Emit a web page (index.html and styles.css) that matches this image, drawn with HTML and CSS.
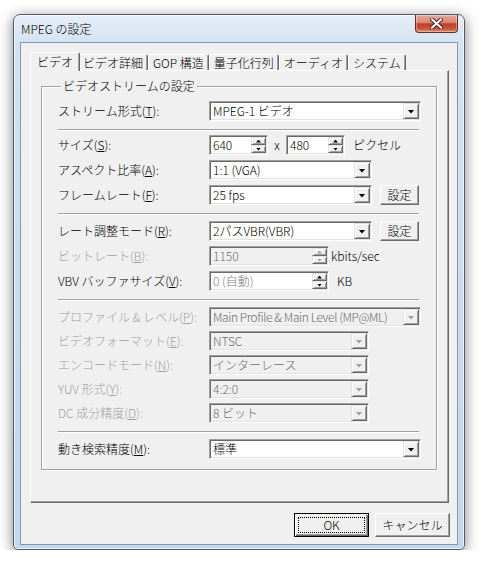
FILE: index.html
```html
<!DOCTYPE html>
<html lang="ja">
<head>
    <meta charset="UTF-8">
    <title>MPEG の設定</title>
    <link rel="stylesheet" href="styles.css">
</head>
<body>
    <div class="window">
        <!-- タイトルバー -->
        <div class="titlebar">
            <span class="title">MPEG の設定</span>
            <button class="close" title="閉じる">
                <svg width="13" height="11" viewBox="0 0 13 11">
                    <path d="M2 1.5 L11 9.5 M11 1.5 L2 9.5" stroke="#4a2a26" stroke-width="4" stroke-linecap="square"/>
                    <path d="M2 1.5 L11 9.5 M11 1.5 L2 9.5" stroke="#fff" stroke-width="2" stroke-linecap="square"/>
                </svg>
            </button>
        </div>

        <div class="client">
            <!-- タブ -->
            <div class="tabs">
                <span class="tab on">ビデオ</span>
                <span class="tab">ビデオ詳細</span>
                <span class="tab">GOP 構造</span>
                <span class="tab">量子化行列</span>
                <span class="tab">オーディオ</span>
                <span class="tab">システム</span>
            </div>

            <div class="panel">
                <fieldset class="group">
                    <legend>ビデオストリームの設定</legend>

                    <div class="row">
                        <span class="lbl">ストリーム形式(<u>T</u>):</span>
                        <div class="combo wide"><span class="val">MPEG-1 ビデオ</span><span class="drop"></span></div>
                    </div>

                    <div class="sep first"></div>

                    <div class="sect">
                        <div class="row">
                            <span class="lbl">サイズ(<u>S</u>):</span>
                            <div class="spin small"><span class="val">640</span><span class="arrows"><span class="up"></span><span class="down"></span></span></div>
                            <span class="times">x</span>
                            <div class="spin small"><span class="val">480</span><span class="arrows"><span class="up"></span><span class="down"></span></span></div>
                            <span class="unit">ピクセル</span>
                        </div>
                        <div class="row">
                            <span class="lbl">アスペクト比率(<u>A</u>):</span>
                            <div class="combo mid"><span class="val">1:1 (VGA)</span><span class="drop"></span></div>
                        </div>
                        <div class="row">
                            <span class="lbl">フレームレート(<u>F</u>):</span>
                            <div class="combo mid"><span class="val">25 fps</span><span class="drop"></span></div>
                            <button class="btn">設定</button>
                        </div>
                    </div>

                    <div class="sep"></div>

                    <div class="sect">
                        <div class="row">
                            <span class="lbl">レート調整モード(<u>R</u>):</span>
                            <div class="combo mid"><span class="val">2パスVBR(VBR)</span><span class="drop"></span></div>
                            <button class="btn">設定</button>
                        </div>
                        <div class="row">
                            <span class="lbl off">ビットレート(<u>B</u>):</span>
                            <div class="spin long dis"><span class="val">1150</span><span class="arrows"><span class="up"></span><span class="down"></span></span></div>
                            <span class="unit tight">kbits/sec</span>
                        </div>
                        <div class="row">
                            <span class="lbl">VBV バッファサイズ(<u>V</u>):</span>
                            <div class="spin long"><span class="val dim">0 (自動)</span><span class="arrows"><span class="up"></span><span class="down"></span></span></div>
                            <span class="unit">KB</span>
                        </div>
                    </div>

                    <div class="sep"></div>

                    <div class="sect dense">
                        <div class="row">
                            <span class="lbl off">プロファイル &amp; レベル(<u>P</u>):</span>
                            <div class="combo wide dis"><span class="val fit">Main Profile &amp; Main Level (MP@ML)</span><span class="drop"></span></div>
                        </div>
                        <div class="row">
                            <span class="lbl off">ビデオフォーマット(<u>E</u>):</span>
                            <div class="combo narrow dis"><span class="val">NTSC</span><span class="drop"></span></div>
                        </div>
                        <div class="row">
                            <span class="lbl off">エンコードモード(<u>N</u>):</span>
                            <div class="combo narrow dis"><span class="val">インターレース</span><span class="drop"></span></div>
                        </div>
                        <div class="row">
                            <span class="lbl off">YUV 形式(<u>Y</u>):</span>
                            <div class="combo narrow dis"><span class="val">4:2:0</span><span class="drop"></span></div>
                        </div>
                        <div class="row">
                            <span class="lbl off">DC 成分精度(<u>D</u>):</span>
                            <div class="combo narrow dis"><span class="val">8 ビット</span><span class="drop"></span></div>
                        </div>
                    </div>

                    <div class="sep"></div>

                    <div class="row">
                        <span class="lbl">動き検索精度(<u>M</u>):</span>
                        <div class="combo wide"><span class="val">標準</span><span class="drop"></span></div>
                    </div>
                </fieldset>
            </div>

            <!-- OK / キャンセル -->
            <div class="buttons">
                <button class="btn big default">OK</button>
                <button class="btn big">キャンセル</button>
            </div>
        </div>
    </div>
</body>
</html>
```

FILE: styles.css
```css
* {
    box-sizing: border-box;
}

body {
    margin: 0;
    background-color: #fff;
    font: 300 12px/14px "Noto Sans CJK JP", "Liberation Sans", sans-serif;
    color: #000;
}

u {
    text-decoration: underline;
    text-underline-offset: 1px;
}

/* ウィンドウ枠 */
.window {
    margin: 14px 0 0 13px;
    width: 452px;
    height: 536px;
    display: flex;
    flex-direction: column;
    border: 1px solid #4e5d6e;
    border-radius: 7px 7px 5px 5px;
    background: linear-gradient(180deg, #e6eef8 0, #d4e2f1 28px, #c8dbef 60%, #c2d8ee 100%);
    box-shadow: 0 3px 14px rgba(0, 0, 0, 0.5), inset 0 0 0 1px rgba(255, 255, 255, 0.7);
}

.titlebar {
    height: 27px;
    flex: none;
    display: flex;
    justify-content: space-between;
    align-items: flex-start;
}

.title {
    padding: 7px 0 0 7px;
}

.close {
    width: 43px;
    height: 18px;
    margin-right: 6px;
    padding: 0;
    border: 1px solid #6b2b22;
    border-top: none;
    border-radius: 0 0 4px 4px;
    background: linear-gradient(180deg, #e7ab9e 0, #d98272 45%, #bf3f2a 52%, #c85238 78%, #de8e72 100%);
    box-shadow: inset 0 0 0 1px rgba(255, 255, 255, 0.35);
    display: flex;
    align-items: center;
    justify-content: center;
}

/* クライアント領域 */
.client {
    flex: 1;
    margin: 0 6px 4px;
    border: 1px solid #8496a9;
    background-color: #f0f0f0;
    display: flex;
    flex-direction: column;
    padding: 9px 8px 7px 9px;
}

/* タブ */
.tabs {
    height: 18px;
    flex: none;
    display: flex;
    align-items: flex-end;
    padding-left: 2px;
}

.tab {
    height: 16px;
    padding: 0 4px;
    border: 1px solid;
    border-bottom: none;
    border-color: #fff #696969 transparent #fff;
    border-radius: 2px 2px 0 0;
    box-shadow: inset -1px 0 #a0a0a0;
    line-height: 15px;
    white-space: nowrap;
}

.tab.on {
    height: 19px;
    margin: 0 -2px -1px;
    padding: 0 6px;
    position: relative;
    z-index: 1;
    background-color: #f0f0f0;
    line-height: 17px;
}

.panel {
    flex: 1;
    border: 1px solid;
    border-color: #fff #696969 #696969 #fff;
    box-shadow: inset -1px -1px #a0a0a0;
    padding: 8px 11px 0 10px;
}

/* グループボックス */
.group {
    margin: 0;
    min-width: 0;
    border: 1px solid #a0a0a0;
    box-shadow: inset 1px 1px #fff, 1px 1px #fff;
    padding: 8px 17px 10px 16px;
}

.group legend {
    margin-left: 3px;
    padding: 0 2px;
    background-color: #f0f0f0;
    line-height: 14px;
}

.sect {
    display: flex;
    flex-direction: column;
    gap: 5px;
}

.sect.dense {
    gap: 4px;
}

.row {
    height: 20px;
    display: flex;
    align-items: center;
}

.lbl {
    width: 151px;
    flex: none;
    white-space: nowrap;
}

.off {
    color: #a0a0a0;
}

.sep {
    height: 2px;
    border-top: 1px solid #a0a0a0;
    border-bottom: 1px solid #fff;
    margin: 8px 0 6px;
}

.sep.first {
    margin-bottom: 4px;
}

/* コンボボックス・エディット */
.combo,
.spin {
    height: 20px;
    flex: none;
    display: flex;
    align-items: stretch;
    border: 1px solid;
    border-color: #a0a0a0 #fff #fff #a0a0a0;
    box-shadow: inset 1px 1px #696969, inset -1px -1px #e3e3e3;
    background-color: #fff;
    padding: 1px;
}

.combo.wide { width: 212px; }
.combo.mid { width: 163px; }
.combo.narrow { width: 160px; }
.spin.small { width: 59px; }
.spin.long { width: 120px; }

.combo.dis,
.spin.dis {
    background-color: #f0f0f0;
    color: #6d6d6d;
}

.val {
    flex: 1;
    padding-left: 2px;
    line-height: 16px;
    white-space: nowrap;
    overflow: hidden;
}

/* 長い項目名は字間を詰める */
.val.fit {
    letter-spacing: -0.4px;
}

.dim {
    color: #808080;
}

.drop {
    width: 16px;
    flex: none;
    background-color: #f0f0f0;
    border: 1px solid;
    border-color: #e3e3e3 #696969 #696969 #e3e3e3;
    box-shadow: inset 1px 1px #fff, inset -1px -1px #a0a0a0;
    display: flex;
    align-items: center;
    justify-content: center;
}

.drop::after {
    content: "";
    width: 7px;
    height: 4px;
    margin-top: 1px;
    background-color: #000;
    clip-path: polygon(0 0, 100% 0, 50% 100%);
}

.dis .drop::after {
    background-color: #a0a0a0;
}

/* スピンボタン */
.arrows {
    width: 15px;
    flex: none;
    display: flex;
    flex-direction: column;
}

.arrows span {
    flex: 1;
    background-color: #f0f0f0;
    border: 1px solid;
    border-color: #e3e3e3 #696969 #696969 #e3e3e3;
    box-shadow: inset 1px 1px #fff, inset -1px -1px #a0a0a0;
    display: flex;
    align-items: center;
    justify-content: center;
}

.arrows span::after {
    content: "";
    width: 5px;
    height: 3px;
    background-color: #000;
}

.arrows .up::after {
    clip-path: polygon(50% 0, 100% 100%, 0 100%);
}

.arrows .down::after {
    clip-path: polygon(0 0, 100% 0, 50% 100%);
}

.dis .arrows span::after {
    background-color: #a0a0a0;
}

.times {
    width: 18px;
    text-align: center;
}

.unit {
    margin-left: 8px;
}

.unit.tight {
    margin-left: 2px;
}

/* ボタン */
.btn {
    font: inherit;
    color: #000;
    height: 20px;
    width: 46px;
    margin-left: 8px;
    padding: 0;
    background-color: #f0f0f0;
    border: 1px solid;
    border-color: #fff #696969 #696969 #fff;
    box-shadow: inset -1px -1px #a0a0a0;
}

.buttons {
    margin-top: 10px;
    flex: none;
    display: flex;
    justify-content: flex-end;
    gap: 6px;
    margin-right: -1px;
}

.btn.big {
    width: 75px;
    height: 24px;
    margin-left: 0;
}

.btn.default {
    border-color: #000;
    box-shadow: inset 1px 1px #fff, inset -1px -1px #696969, inset -2px -2px #a0a0a0;
    outline: 1px dotted #000;
    outline-offset: -5px;
}
```
